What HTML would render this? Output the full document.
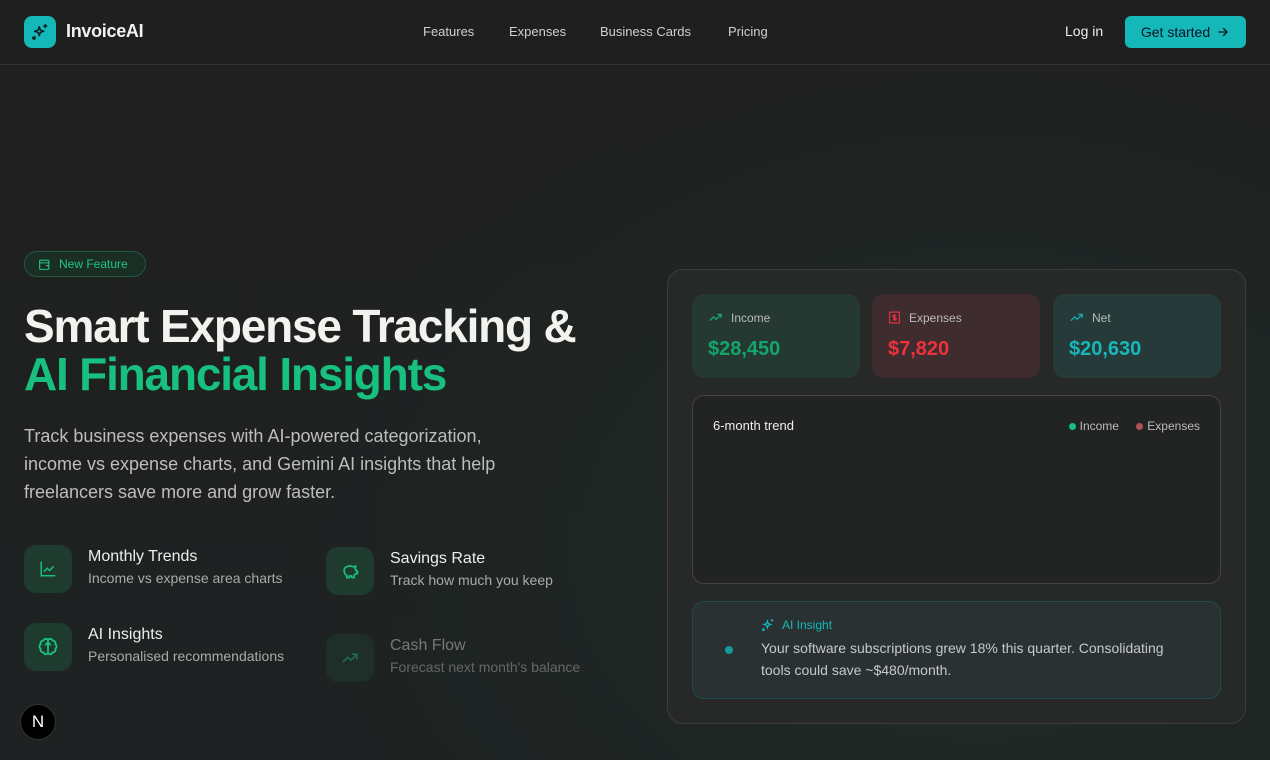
<!DOCTYPE html>
<html><head><meta charset="utf-8"><style>
*{box-sizing:border-box;margin:0;padding:0}
body{width:1270px;height:760px;overflow:hidden;background:#202020;font-family:"Liberation Sans",sans-serif;color:#eee;position:relative}
.bg{position:absolute;left:0;top:65px;width:1270px;height:695px;background:radial-gradient(ellipse 700px 520px at 980px 480px,#223029 0%,#1f2624 50%,rgba(32,32,32,0) 100%),linear-gradient(180deg,#202020,#1e2222)}
header{position:absolute;left:0;top:0;width:1270px;height:65px;border-bottom:1px solid #333;background:#1f1f1f}
.logo{position:absolute;left:24px;top:16px;width:32px;height:32px;border-radius:8px;background:#14b8b8;display:flex;align-items:center;justify-content:center}
.brand{position:absolute;left:66px;top:21px;font-size:18px;font-weight:bold;color:#f2f2f2;letter-spacing:-0.3px}
.nav{position:absolute;top:24px;font-size:13px;color:#cfcfcf}
.login{position:absolute;left:1065px;top:23px;font-size:14px;color:#eee}
.btn{position:absolute;left:1125px;top:16px;width:121px;height:32px;border-radius:6px;background:#14b8b8;color:#112;font-size:14px;display:flex;align-items:center;justify-content:center;gap:6px}
.pill{position:absolute;left:24px;top:251px;width:122px;height:26px;border-radius:13px;border:1px solid #1f5a3e;background:#1a2e25;color:#22c58a;font-size:12px;display:flex;align-items:center;padding-left:13px;gap:8px}
h1{position:absolute;left:24px;top:302px;font-size:46px;line-height:48px;font-weight:bold;letter-spacing:-1.2px;color:#f2f2ee}
h1 span{color:#17c07f}
.sub{position:absolute;left:24px;top:422px;width:500px;font-size:18px;line-height:28px;color:#bdbdbd}
.feat{position:absolute;display:flex;gap:16px}
.ic{width:48px;height:48px;border-radius:12px;background:#1f3a2e;display:flex;align-items:center;justify-content:center}
.ft{font-size:16px;color:#eee;margin-top:3px}
.fd{font-size:14px;color:#aaa;margin-top:4px}
.panel{position:absolute;left:667px;top:269px;width:579px;height:455px;border-radius:16px;background:#272828;border:1px solid #3d3d3d}
.card{position:absolute;top:24px;width:168px;height:84px;border-radius:12px;padding:16px}
.cl{font-size:12px;color:#bbb;display:flex;align-items:center;gap:8px;height:15px}
.cv{font-size:20px;font-weight:bold;margin-top:13px}
.chart{position:absolute;left:24px;top:125px;width:529px;height:189px;border-radius:12px;border:1px solid #444;background:#222323}
.ins{position:absolute;left:24px;top:331px;width:529px;height:98px;border-radius:12px;border:1px solid #1d4d4b;background:#2a3132}
.nx{position:absolute;left:20px;top:704px;width:36px;height:36px;border-radius:50%;background:#000;border:1px solid #333;color:#fff;font-size:17px;display:flex;align-items:center;justify-content:center}
</style></head><body>
<div class="bg"></div>
<header>
<div class="logo"><svg width="18" height="18" viewBox="0 0 24 24" fill="none" stroke="#102020" stroke-width="2" stroke-linecap="round" stroke-linejoin="round"><path d="M11 5l1.5 4.5L17 11l-4.5 1.5L11 17l-1.5-4.5L5 11l4.5-1.5z"/><path d="M19 2v4M17 4h4"/><circle cx="4" cy="20" r="1.5"/></svg></div>
<div class="brand">InvoiceAI</div>
<div class="nav" style="left:423px">Features</div>
<div class="nav" style="left:509px">Expenses</div>
<div class="nav" style="left:600px">Business Cards</div>
<div class="nav" style="left:728px">Pricing</div>
<div class="login">Log in</div>
<div class="btn">Get started <svg width="14" height="14" viewBox="0 0 24 24" fill="none" stroke="#112" stroke-width="2.2" stroke-linecap="round"><path d="M5 12h14M13 6l6 6-6 6"/></svg></div>
</header>
<div class="pill"><svg width="13" height="13" viewBox="0 0 24 24" fill="none" stroke="#22c58a" stroke-width="2"><rect x="3" y="4" width="17" height="17" rx="2"/><path d="M3 9h17M15 14h5"/></svg>New Feature</div>
<h1>Smart Expense Tracking &amp;<br><span>AI Financial Insights</span></h1>
<div class="sub">Track business expenses with AI-powered categorization, income vs expense charts, and Gemini AI insights that help freelancers save more and grow faster.</div>
<div class="feat" style="left:24px;top:545px"><div class="ic"><svg width="18" height="18" viewBox="0 0 24 24" fill="none" stroke="#17c07f" stroke-width="2" stroke-linecap="round"><path d="M3 3v18h18"/><path d="M7 15l4-4 3 3 5-5"/></svg></div><div><div class="ft">Monthly Trends</div><div class="fd">Income vs expense area charts</div></div></div>
<div class="feat" style="left:326px;top:547px"><div class="ic"><svg width="20" height="20" viewBox="0 0 24 24" fill="none" stroke="#17c07f" stroke-width="2" stroke-linejoin="round"><path d="M5 11c0-3 3-5 7-5 2 0 3 .5 4 1l3-1-1 3c1 1 1.5 2 1.5 3H21v3h-2c-.5 1-1 1.5-2 2v3h-3v-2h-3v2H8v-3c-2-1-3-3-3-5z"/></svg></div><div><div class="ft">Savings Rate</div><div class="fd">Track how much you keep</div></div></div>
<div class="feat" style="left:24px;top:623px"><div class="ic"><svg width="22" height="22" viewBox="0 0 24 24" fill="none" stroke="#17c07f" stroke-width="2"><path d="M12 4a3 3 0 0 0-5 1 3 3 0 0 0-3 4 3 3 0 0 0 0 5 3 3 0 0 0 3 4 3 3 0 0 0 5 1zM12 4a3 3 0 0 1 5 1 3 3 0 0 1 3 4 3 3 0 0 1 0 5 3 3 0 0 1-3 4 3 3 0 0 1-5 1zM12 4v16M9 10l3-3 3 3"/></svg></div><div><div class="ft">AI Insights</div><div class="fd">Personalised recommendations</div></div></div>
<div class="feat" style="left:326px;top:634px;opacity:.5"><div class="ic" style="background:#1f3a2e"><svg width="18" height="18" viewBox="0 0 24 24" fill="none" stroke="#17c07f" stroke-width="2" stroke-linecap="round"><path d="M3 17l6-6 4 4 8-8M15 7h6v6"/></svg></div><div><div class="ft" style="color:#ccc">Cash Flow</div><div class="fd">Forecast next month's balance</div></div></div>
<div class="panel">
<div class="card" style="left:24px;background:#253832"><div class="cl"><svg width="15" height="15" viewBox="0 0 24 24" fill="none" stroke="#17a86f" stroke-width="2"><path d="M3 17l6-6 4 4 8-8M15 7h6v6"/></svg>Income</div><div class="cv" style="color:#12a56c">$28,450</div></div>
<div class="card" style="left:204px;background:#3f2c2e"><div class="cl"><svg width="13" height="13" viewBox="0 0 24 24" fill="none" stroke="#ef3340" stroke-width="2"><rect x="3" y="2" width="18" height="20"/><path d="M15 8h-4a2 2 0 0 0 0 4h2a2 2 0 0 1 0 4H9M12 6v12"/></svg>Expenses</div><div class="cv" style="color:#f0313d">$7,820</div></div>
<div class="card" style="left:385px;background:#263a3a"><div class="cl"><svg width="15" height="15" viewBox="0 0 24 24" fill="none" stroke="#14b0b0" stroke-width="2"><path d="M3 17l6-6 4 4 8-8M15 7h6v6"/></svg>Net</div><div class="cv" style="color:#16b8b8">$20,630</div></div>
<div class="chart"><div style="position:absolute;left:20px;top:22px;font-size:13px;color:#eee">6-month trend</div>
<div style="position:absolute;right:20px;top:23px;font-size:12px;color:#bbb"><span style="display:inline-block;width:7px;height:7px;border-radius:50%;background:#17c07f;margin-right:4px"></span>Income <span style="display:inline-block;width:7px;height:7px;border-radius:50%;background:#b05050;margin:0 4px 0 14px"></span>Expenses</div></div>
<div class="ins"><div style="position:absolute;left:32px;top:44px;width:8px;height:8px;border-radius:50%;background:#139a9a"></div>
<div style="position:absolute;left:68px;top:16px;font-size:12px;color:#16b8b8;display:flex;gap:7px;align-items:center"><svg width="14" height="14" viewBox="0 0 24 24" fill="none" stroke="#16b8b8" stroke-width="2"><path d="M11 5l1.5 4.5L17 11l-4.5 1.5L11 17l-1.5-4.5L5 11l4.5-1.5z"/><path d="M19 2v4M17 4h4"/><circle cx="4" cy="20" r="1.5"/></svg>AI Insight</div>
<div style="position:absolute;left:68px;top:35px;width:425px;font-size:14px;line-height:22px;color:#c8c8c8">Your software subscriptions grew 18% this quarter. Consolidating tools could save ~$480/month.</div></div>
</div>
<div class="nx">N</div>
</body></html>
